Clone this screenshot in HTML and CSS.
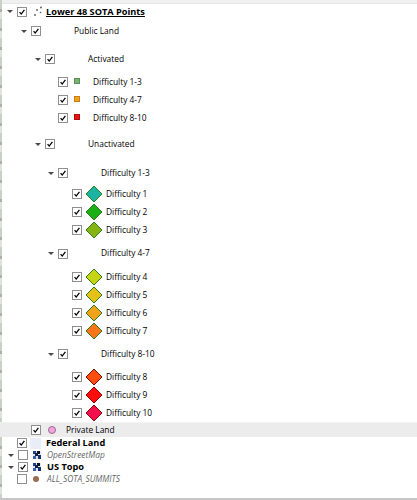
FILE: index.html
```html
<!DOCTYPE html>
<html>
<head>
    <meta charset="UTF-8">
    <title>Layers</title>
    <link rel="stylesheet" href="styles.css">
</head>
<body>
    <div class="map-edge"></div>
    <div class="panel">
        <div class="topbar"></div>

        <ul class="tree">
            <!-- point layer -->
            <li class="row r-root d0">
                <span class="arrow"></span>
                <span class="check on"><svg viewBox="0 0 10 10"><path d="M2 5.2 L4 7.6 L8 2.2"/></svg></span>
                <svg class="points" viewBox="0 0 10 11"><circle cx="2" cy="9" r="0.9"/><circle cx="4" cy="4" r="0.9"/><circle cx="8" cy="1.5" r="0.9"/><circle cx="7.5" cy="6.5" r="0.8"/></svg>
                <span class="label bold under">Lower 48 SOTA Points</span>
            </li>
            <li class="row r-public d1">
                <span class="arrow"></span>
                <span class="check on"><svg viewBox="0 0 10 10"><path d="M2 5.2 L4 7.6 L8 2.2"/></svg></span>
                <span class="label group-label">Public Land</span>
            </li>
            <li class="row r-sub d2">
                <span class="arrow"></span>
                <span class="check on"><svg viewBox="0 0 10 10"><path d="M2 5.2 L4 7.6 L8 2.2"/></svg></span>
                <span class="label group-label">Activated</span>
            </li>
            <li class="row r-leaf">
                <span class="check on"><svg viewBox="0 0 10 10"><path d="M2 5.2 L4 7.6 L8 2.2"/></svg></span>
                <span class="swatch sq-green"></span>
                <span class="label">Difficulty 1-3</span>
            </li>
            <li class="row r-leaf">
                <span class="check on"><svg viewBox="0 0 10 10"><path d="M2 5.2 L4 7.6 L8 2.2"/></svg></span>
                <span class="swatch sq-orange"></span>
                <span class="label">Difficulty 4-7</span>
            </li>
            <li class="row r-leaf">
                <span class="check on"><svg viewBox="0 0 10 10"><path d="M2 5.2 L4 7.6 L8 2.2"/></svg></span>
                <span class="swatch sq-red"></span>
                <span class="label">Difficulty 8-10</span>
            </li>
            <li class="row r-unact d2">
                <span class="arrow"></span>
                <span class="check on"><svg viewBox="0 0 10 10"><path d="M2 5.2 L4 7.6 L8 2.2"/></svg></span>
                <span class="label group-label">Unactivated</span>
            </li>

            <li class="row r-g1 d3">
                <span class="arrow"></span>
                <span class="check on"><svg viewBox="0 0 10 10"><path d="M2 5.2 L4 7.6 L8 2.2"/></svg></span>
                <span class="label group-label">Difficulty 1-3</span>
            </li>
            <li class="row r-diamond">
                <span class="check on"><svg viewBox="0 0 10 10"><path d="M2 5.2 L4 7.6 L8 2.2"/></svg></span>
                <svg class="diamond" viewBox="0 0 18 18"><polygon points="9,1 17,9 9,17 1,9" fill="#1db3a2" stroke="#2f7d1c"/></svg>
                <span class="label">Difficulty 1</span>
            </li>
            <li class="row r-diamond">
                <span class="check on"><svg viewBox="0 0 10 10"><path d="M2 5.2 L4 7.6 L8 2.2"/></svg></span>
                <svg class="diamond" viewBox="0 0 18 18"><polygon points="9,1 17,9 9,17 1,9" fill="#1cae17" stroke="#2f7d1c"/></svg>
                <span class="label">Difficulty 2</span>
            </li>
            <li class="row r-diamond">
                <span class="check on"><svg viewBox="0 0 10 10"><path d="M2 5.2 L4 7.6 L8 2.2"/></svg></span>
                <svg class="diamond" viewBox="0 0 18 18"><polygon points="9,1 17,9 9,17 1,9" fill="#86b415" stroke="#2f7d1c"/></svg>
                <span class="label">Difficulty 3</span>
            </li>

            <li class="row r-g2 d3">
                <span class="arrow"></span>
                <span class="check on"><svg viewBox="0 0 10 10"><path d="M2 5.2 L4 7.6 L8 2.2"/></svg></span>
                <span class="label group-label">Difficulty 4-7</span>
            </li>
            <li class="row r-diamond">
                <span class="check on"><svg viewBox="0 0 10 10"><path d="M2 5.2 L4 7.6 L8 2.2"/></svg></span>
                <svg class="diamond" viewBox="0 0 18 18"><polygon points="9,1 17,9 9,17 1,9" fill="#c7d414" stroke="#2f7d1c"/></svg>
                <span class="label">Difficulty 4</span>
            </li>
            <li class="row r-diamond">
                <span class="check on"><svg viewBox="0 0 10 10"><path d="M2 5.2 L4 7.6 L8 2.2"/></svg></span>
                <svg class="diamond" viewBox="0 0 18 18"><polygon points="9,1 17,9 9,17 1,9" fill="#e3c116" stroke="#2f7d1c"/></svg>
                <span class="label">Difficulty 5</span>
            </li>
            <li class="row r-diamond">
                <span class="check on"><svg viewBox="0 0 10 10"><path d="M2 5.2 L4 7.6 L8 2.2"/></svg></span>
                <svg class="diamond" viewBox="0 0 18 18"><polygon points="9,1 17,9 9,17 1,9" fill="#f2a21a" stroke="#2f7d1c"/></svg>
                <span class="label">Difficulty 6</span>
            </li>
            <li class="row r-diamond">
                <span class="check on"><svg viewBox="0 0 10 10"><path d="M2 5.2 L4 7.6 L8 2.2"/></svg></span>
                <svg class="diamond" viewBox="0 0 18 18"><polygon points="9,1 17,9 9,17 1,9" fill="#fb741a" stroke="#2f7d1c"/></svg>
                <span class="label">Difficulty 7</span>
            </li>

            <li class="row r-g3 d3">
                <span class="arrow"></span>
                <span class="check on"><svg viewBox="0 0 10 10"><path d="M2 5.2 L4 7.6 L8 2.2"/></svg></span>
                <span class="label group-label">Difficulty 8-10</span>
            </li>
            <li class="row r-diamond">
                <span class="check on"><svg viewBox="0 0 10 10"><path d="M2 5.2 L4 7.6 L8 2.2"/></svg></span>
                <svg class="diamond" viewBox="0 0 18 18"><polygon points="9,1 17,9 9,17 1,9" fill="#ff4d0d" stroke="#7a0c06"/></svg>
                <span class="label">Difficulty 8</span>
            </li>
            <li class="row r-diamond">
                <span class="check on"><svg viewBox="0 0 10 10"><path d="M2 5.2 L4 7.6 L8 2.2"/></svg></span>
                <svg class="diamond" viewBox="0 0 18 18"><polygon points="9,1 17,9 9,17 1,9" fill="#ff0d0d" stroke="#8a0a0a"/></svg>
                <span class="label">Difficulty 9</span>
            </li>
            <li class="row r-diamond">
                <span class="check on"><svg viewBox="0 0 10 10"><path d="M2 5.2 L4 7.6 L8 2.2"/></svg></span>
                <svg class="diamond" viewBox="0 0 18 18"><polygon points="9,1 17,9 9,17 1,9" fill="#f2104d" stroke="#8a0a0a"/></svg>
                <span class="label">Difficulty 10</span>
            </li>

            <li class="row r-private selected">
                <span class="check on"><svg viewBox="0 0 10 10"><path d="M2 5.2 L4 7.6 L8 2.2"/></svg></span>
                <span class="dot pink"></span>
                <span class="label">Private Land</span>
            </li>

            <!-- other layers -->
            <li class="row r-layer d0">
                <span class="check on"><svg viewBox="0 0 10 10"><path d="M2 5.2 L4 7.6 L8 2.2"/></svg></span>
                <span class="fill-swatch"></span>
                <span class="label bold">Federal Land</span>
            </li>
            <li class="row r-layer d0">
                <span class="arrow"></span>
                <span class="check"></span>
                <svg class="raster" viewBox="0 0 8 8"><rect width="8" height="8" fill="#dfe6f3"/><rect x="0" y="0" width="3" height="3" fill="#1d3f8f"/><rect x="4" y="0" width="3" height="3" fill="#111"/><rect x="2" y="2" width="3" height="3" fill="#0d1f4f"/><rect x="0" y="5" width="3" height="3" fill="#3a5fae"/><rect x="5" y="4" width="3" height="4" fill="#16306e"/></svg>
                <span class="label muted">OpenStreetMap</span>
            </li>
            <li class="row r-layer d0">
                <span class="arrow"></span>
                <span class="check on"><svg viewBox="0 0 10 10"><path d="M2 5.2 L4 7.6 L8 2.2"/></svg></span>
                <svg class="raster" viewBox="0 0 8 8"><rect width="8" height="8" fill="#dfe6f3"/><rect x="0" y="0" width="3" height="3" fill="#1d3f8f"/><rect x="4" y="0" width="3" height="3" fill="#111"/><rect x="2" y="2" width="3" height="3" fill="#0d1f4f"/><rect x="0" y="5" width="3" height="3" fill="#3a5fae"/><rect x="5" y="4" width="3" height="4" fill="#16306e"/></svg>
                <span class="label bold">US Topo</span>
            </li>
            <li class="row r-layer d0">
                <span class="check"></span>
                <span class="dot brown"></span>
                <span class="label muted">ALL_SOTA_SUMMITS</span>
            </li>
        </ul>
    </div>
    <div class="bottom-line"></div>
</body>
</html>
```

FILE: styles.css
```css
/* Layer tree panel */
* {
    margin: 0;
    padding: 0;
    box-sizing: border-box;
}

body {
    width: 417px;
    height: 500px;
    overflow: hidden;
    background: #fff;
    font-family: "Open Sans", "Noto Sans", sans-serif;
    font-size: 8.4px;
    color: #000;
    display: flex;
    position: relative;
}

/* sliver of map canvas at the far left */
.map-edge {
    width: 2px;
    flex: none;
    background: repeating-linear-gradient(to bottom, #c9d0c6 0, #c9d0c6 9px, #a9b2ad 9px, #a9b2ad 12px, #dfe3dc 12px, #dfe3dc 19px);
}

.panel {
    flex: 1;
}

.topbar {
    height: 4px;
    background: #f0f0f0;
    border-bottom: 1px solid #e6e6e6;
}

.bottom-line {
    position: absolute;
    left: 0;
    right: 0;
    bottom: 0;
    height: 2px;
    background: #c6c6c6;
}

.tree {
    list-style: none;
}

/* Rows */
.row {
    display: flex;
    align-items: center;
    white-space: nowrap;
}

/* indent per depth level */
.d0 { padding-left: 15px; }
.d1 { padding-left: 29px; }
.d2 { padding-left: 43px; }
.d3 { padding-left: 56px; }
.d4 { padding-left: 70px; }

.r-root { height: 15px; }
.r-public { height: 23px; padding-top: 1px; }
.r-sub { height: 31px; padding-top: 3px; }
.r-unact { height: 34px; }
.r-g1 { height: 24px; }
.r-g2 { height: 29px; }
.r-g3 { height: 28px; }
.r-layer { height: 12px; }

.r-leaf {
    height: 18px;
    padding-left: 56px;
}

.r-diamond {
    height: 18px;
    padding-left: 70px;
}

.r-private {
    height: 15px;
}

.selected {
    background: #ececec;
    border-top: 1px solid #f3f3f3;
    margin-left: -2px;
    padding-left: 31px;
}

/* expand arrow sits left of the checkbox */
.arrow {
    width: 0;
    height: 0;
    border-left: 3px solid transparent;
    border-right: 3px solid transparent;
    border-top: 3px solid #4a4a4a;
    margin-left: -10px;
    margin-right: 4px;
}

.r-layer .arrow {
    margin-left: -9px;
}

.check {
    width: 10px;
    height: 10px;
    flex: none;
    border: 1px solid #8f8f8f;
    background: #fff;
    display: flex;
}

.check svg {
    width: 8px;
    height: 8px;
}

.check path {
    fill: none;
    stroke: #000;
    stroke-width: 1.6;
}

.label {
    line-height: 1;
}

.group-label {
    margin-left: 33px;
}

.bold {
    font-weight: 700;
    font-size: 9.2px;
}

.under {
    text-decoration: underline;
}

.muted {
    font-style: italic;
    color: #666;
}

/* Symbols */
.points {
    width: 10px;
    height: 11px;
    margin: 0 3px 0 6px;
    fill: #555;
}

.swatch {
    width: 6px;
    height: 6px;
    margin: -3px 13px 0 6px;
}

.sq-green { background: #77b46d; border: 1px solid #5b8f5a; }
.sq-orange { background: #f4a11f; border: 1px solid #c97f12; }
.sq-red { background: #e81212; border: 1px solid #b00c0c; }

.diamond {
    width: 18px;
    height: 18px;
    margin: 0 3px 0 3px;
}

.dot {
    border-radius: 50%;
}

.dot.pink {
    width: 8px;
    height: 8px;
    background: #f2a4dc;
    border: 1px solid #9b6b8d;
    margin: 0 10px 0 7px;
}

.dot.brown {
    width: 6px;
    height: 6px;
    background: #9a6b4e;
    margin: 0 8px 0 6px;
}

.fill-swatch {
    width: 11px;
    height: 11px;
    background: #e8edf8;
    margin: 0 5px 0 3px;
}

.raster {
    width: 8px;
    height: 8px;
    margin: 0 6px 0 5px;
}
```
